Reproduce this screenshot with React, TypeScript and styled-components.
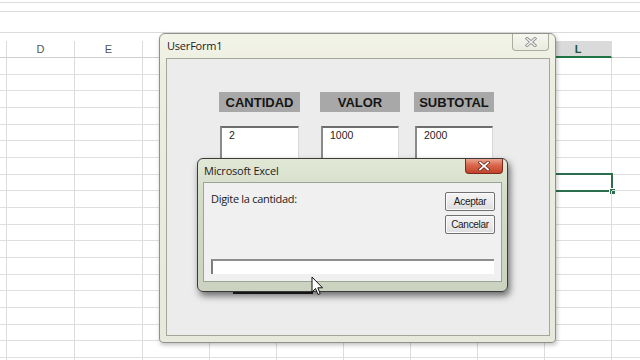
import styled, { createGlobalStyle } from 'styled-components';

const GlobalStyle = createGlobalStyle`
  html, body {
    margin: 0;
    padding: 0;
    background: #ffffff;
    overflow: hidden;
  }
  body {
    width: 640px;
    height: 360px;
    font-family: 'Noto Sans', 'Liberation Sans', sans-serif;
  }
`;

const Screen = styled.div`
  position: relative;
  width: 640px;
  height: 360px;
  overflow: hidden;
  background: #fff;
`;

// ---- hoja de cálculo de fondo ----
const TopStrip = styled.div<{ $h: number }>`
  height: ${(p) => p.$h}px;
  border-bottom: 1px solid #dcdcdc;
`;

const Gap = styled.div`
  height: 8px;
`;

const GridRow = styled.div<{ $header?: boolean }>`
  display: grid;
  grid-template-columns: 7px 68px 68px repeat(8, 67px) 80px;
  height: ${(p) => (p.$header ? '17px' : '16.67px')};
  box-sizing: border-box;
`;

const Cell = styled.div<{ $header?: boolean; $active?: boolean }>`
  position: relative;
  box-sizing: border-box;
  border-right: 1px solid #dcdcdc;
  border-bottom: 1px solid ${(p) => (p.$header ? '#cfcfcf' : '#dfdfdf')};
  font-family: 'Liberation Sans', sans-serif;
  font-size: 11px;
  color: #555;
  display: flex;
  align-items: center;
  justify-content: center;
  ${(p) =>
    p.$header && p.$active
      ? `background: #dadada; color: #20543a; font-weight: bold; border-bottom: 2px solid #217346;`
      : ''}
`;

const Selection = styled.div`
  position: absolute;
  left: -80px;
  right: -2px;
  top: -2px;
  bottom: -2px;
  border: 2px solid #2c6e4d;
  pointer-events: none;
`;

const FillHandle = styled.div`
  position: absolute;
  right: -5px;
  bottom: -5px;
  width: 5px;
  height: 5px;
  background: #2c6e4d;
  border: 1px solid #fff;
`;

// ---- UserForm1 ----
const UserForm = styled.div`
  position: absolute;
  left: 159px;
  top: 33px;
  width: 397px;
  height: 310px;
  box-sizing: border-box;
  display: flex;
  flex-direction: column;
  border: 1px solid #8f928a;
  border-radius: 6px 6px 4px 4px;
  background: linear-gradient(180deg, #f3f4e8 0%, #eceee0 12%, #e6e9dc 100%);
  box-shadow: 1px 2px 4px rgba(0, 0, 0, 0.25);
`;

const TitleBar = styled.div`
  height: 24px;
  display: flex;
  justify-content: space-between;
  align-items: flex-start;
  padding-left: 7px;
`;

const TitleText = styled.span`
  font-family: 'Open Sans', 'Noto Sans', sans-serif;
  font-size: 11px;
  line-height: 23px;
  color: #1c1c1c;
  letter-spacing: -0.2px;
`;

const GhostClose = styled.div`
  width: 37px;
  height: 17px;
  margin-right: 6px;
  box-sizing: border-box;
  border: 1px solid #a9ad9f;
  border-top: none;
  border-radius: 0 0 4px 4px;
  background: linear-gradient(180deg, #f6f7ef, #e9ebe0);
  display: flex;
  align-items: center;
  justify-content: center;
`;

const FormClient = styled.div`
  flex: 1;
  margin: 0 5px 6px 6px;
  border: 1px solid #a3a798;
  background: #ececec;
  padding: 33px 0 0 52px;
`;

const FieldRow = styled.div`
  display: flex;
`;

const Field = styled.div<{ $ml: number; $w: number }>`
  width: ${(p) => p.$w}px;
  margin-left: ${(p) => p.$ml}px;
  display: flex;
  flex-direction: column;
`;

const HeadLabel = styled.div`
  height: 20px;
  background: #a8a8a8;
  font-family: 'Liberation Sans', sans-serif;
  font-weight: bold;
  font-size: 13px;
  color: #151515;
  display: flex;
  align-items: center;
  justify-content: center;
`;

const TextBox = styled.div`
  margin: 14px 1px 0;
  height: 44px;
  box-sizing: border-box;
  background: #fff;
  border-top: 2px solid #6e6e6e;
  border-left: 2px solid #8a8a8a;
  border-right: 1px solid #d8d8d8;
  border-bottom: 1px solid #d8d8d8;
  padding: 1px 0 0 7px;
  font-family: 'Liberation Sans', sans-serif;
  font-size: 10.5px;
  color: #222;
`;

const HiddenBar = styled.div`
  width: 80px;
  height: 4px;
  margin: 120px 0 0 14px;
  background: #262626;
`;

// ---- Microsoft Excel InputBox ----
const Dialog = styled.div`
  position: absolute;
  left: 197px;
  top: 158px;
  width: 311px;
  height: 134px;
  box-sizing: border-box;
  display: flex;
  flex-direction: column;
  border: 1px solid #3a3a3a;
  border-radius: 6px;
  background: linear-gradient(180deg, #e2e8d6 0%, #d4dbc8 30%, #cbd2bf 100%);
  box-shadow: 2px 4px 7px rgba(0, 0, 0, 0.55);
`;

const DialogTitle = styled(TitleBar)`
  height: 23px;
  padding-left: 6px;
`;

const RedClose = styled.div`
  width: 38px;
  height: 15px;
  margin-right: 4px;
  box-sizing: border-box;
  border: 1px solid #7c2a1c;
  border-top: none;
  border-radius: 0 0 4px 4px;
  background: linear-gradient(180deg, #eba58f 0%, #d9664a 45%, #c2432a 100%);
  display: flex;
  align-items: center;
  justify-content: center;
`;

const DialogClient = styled.div`
  flex: 1;
  margin: 0 5px 9px 5px;
  border: 1px solid #9ea492;
  background: #f0f0f0;
  display: flex;
  flex-direction: column;
  padding: 9px 6px 0 7px;
`;

const PromptRow = styled.div`
  display: flex;
  justify-content: space-between;
  align-items: flex-start;
`;

const Prompt = styled.span`
  font-family: 'Open Sans', 'Noto Sans', sans-serif;
  font-size: 11px;
  line-height: 14px;
  color: #1a1a1a;
  letter-spacing: -0.3px;
`;

const ButtonCol = styled.div`
  display: flex;
  flex-direction: column;
  gap: 4px;
`;

const Button = styled.div`
  width: 50px;
  height: 19px;
  box-sizing: border-box;
  border: 1px solid #707070;
  border-radius: 2px;
  box-shadow: inset 0 0 0 1px #fbfbfb;
  background: linear-gradient(180deg, #f4f4f4 0%, #ebebeb 50%, #dddddd 100%);
  font-family: 'Liberation Sans', sans-serif;
  font-size: 10px;
  letter-spacing: -0.3px;
  color: #1a1a1a;
  display: flex;
  align-items: center;
  justify-content: center;
`;

const InputLine = styled.div`
  margin: auto 1px 7px 0;
  height: 15px;
  box-sizing: border-box;
  background: #fff;
  border-top: 2px solid #8e8e8e;
  border-left: 2px solid #7d7d7d;
`;

const Cursor = styled.svg`
  position: absolute;
  left: 311px;
  top: 276px;
`;

const XIcon = ({ outline, fill, w }: { outline: string; fill: string; w: number }) => (
  <svg width="12" height="10" viewBox="0 0 12 10">
    <path d="M2 1.5 L10 8.5 M10 1.5 L2 8.5" stroke={outline} strokeWidth={w + 1.6} strokeLinecap="square" />
    <path d="M2 1.5 L10 8.5 M10 1.5 L2 8.5" stroke={fill} strokeWidth={w} strokeLinecap="square" />
  </svg>
);

const columns = ['', 'D', 'E', 'F', 'G', 'H', 'I', 'J', 'K', 'L', 'M'];
const headers = ['', 'D', 'E', '', '', '', '', '', '', 'L', ''];

const fields = [
  { name: 'CANTIDAD', value: '2', ml: 0, w: 81 },
  { name: 'VALOR', value: '1000', ml: 20, w: 80 },
  { name: 'SUBTOTAL', value: '2000', ml: 14, w: 80 },
];

const App: React.FC = () => {
  const rows = Array.from({ length: 19 }, (_, i) => i);

  return (
    <Screen>
      <GlobalStyle />
      <TopStrip $h={2} />
      <TopStrip $h={8} />
      <TopStrip $h={20} />
      <Gap />
      <GridRow $header>
        {columns.map((c, i) => (
          <Cell key={c + i} $header $active={c === 'L'}>
            {headers[i]}
          </Cell>
        ))}
      </GridRow>
      {rows.map((r) => (
        <GridRow key={r}>
          {columns.map((c, i) => (
            <Cell key={c + i}>
              {r === 7 && c === 'L' && (
                <Selection>
                  <FillHandle />
                </Selection>
              )}
            </Cell>
          ))}
        </GridRow>
      ))}

      <UserForm>
        <TitleBar>
          <TitleText>UserForm1</TitleText>
          <GhostClose>
            <XIcon outline="#8c8c8c" fill="#f4f4f4" w={1.4} />
          </GhostClose>
        </TitleBar>
        <FormClient>
          <FieldRow>
            {fields.map((f) => (
              <Field key={f.name} $ml={f.ml} $w={f.w}>
                <HeadLabel>{f.name}</HeadLabel>
                <TextBox>{f.value}</TextBox>
              </Field>
            ))}
          </FieldRow>
          <HiddenBar />
        </FormClient>
      </UserForm>

      <Dialog>
        <DialogTitle>
          <TitleText>Microsoft Excel</TitleText>
          <RedClose>
            <XIcon outline="#6a2315" fill="#ffffff" w={1.8} />
          </RedClose>
        </DialogTitle>
        <DialogClient>
          <PromptRow>
            <Prompt>Digite la cantidad:</Prompt>
            <ButtonCol>
              <Button>Aceptar</Button>
              <Button>Cancelar</Button>
            </ButtonCol>
          </PromptRow>
          <InputLine />
        </DialogClient>
      </Dialog>

      <Cursor width="13" height="20" viewBox="0 0 13 20">
        <path d="M1 1 L1 16 L4.5 12.5 L7 18.5 L9.2 17.6 L6.8 11.8 L11.5 11.8 Z" fill="#fff" stroke="#111" strokeWidth="1" strokeLinejoin="round" />
      </Cursor>
    </Screen>
  );
};

export default App;
